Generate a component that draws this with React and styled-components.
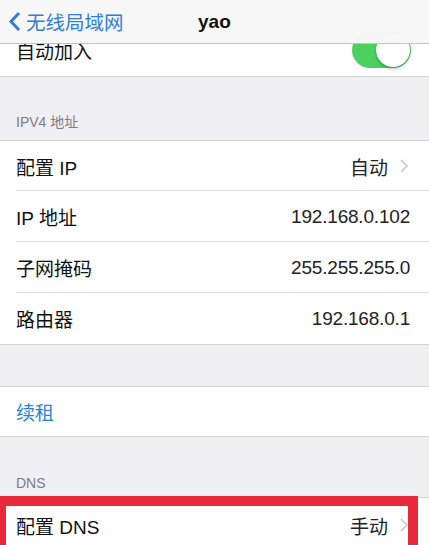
import styled, { createGlobalStyle } from "styled-components";

const GlobalStyle = createGlobalStyle`
  html, body {
    margin: 0;
    padding: 0;
    background: #efeff4;
  }
  body {
    font-family: "Liberation Sans", "Noto Sans CJK SC", sans-serif;
    color: #000;
  }
`;

const Screen = styled.div`
  position: relative;
  width: 429px;
  height: 545px;
  overflow: hidden;
  background: #efeff4;
`;

const NavBar = styled.div`
  position: absolute;
  top: 0;
  left: 0;
  right: 0;
  height: 43px;
  z-index: 2;
  background: rgba(247, 247, 248, 0.98);
  border-bottom: 1px solid #c4c4c8;
  display: flex;
  align-items: center;
`;

const BackButton = styled.div`
  display: flex;
  align-items: center;
  gap: 5px;
  padding-left: 8px;
  color: #2f7fd8;
  font-size: 19.5px;
  width: 190px;
`;

const NavTitle = styled.div`
  font-family: "Liberation Sans", sans-serif;
  font-weight: 700;
  font-size: 19px;
  color: #111;
`;

const Content = styled.div`
  padding-top: 24px;
  display: flex;
  flex-direction: column;
`;

const Group = styled.div`
  position: relative;
  background: #fff;
  border-top: 1px solid #d2d2d6;
  border-bottom: 1px solid #d2d2d6;
`;

const Row = styled.div`
  display: flex;
  align-items: center;
  height: ${(p) => p.$height || 51}px;
  padding-left: 16px;
  padding-right: ${(p) => (p.$chevron ? 21 : 19)}px;
  position: relative;
  &:not(:last-child)::after {
    content: "";
    position: absolute;
    left: 16px;
    right: 0;
    bottom: 0;
    height: 1px;
    background: #dcdcdf;
  }
`;

const Label = styled.div`
  flex: 1;
  font-size: 19px;
  color: ${(p) => (p.$link ? "#3181d2" : "#111")};
`;

const Value = styled.div`
  font-size: 19px;
  letter-spacing: ${(p) => (p.$digits ? "-0.2px" : "0")};
  color: #222;
`;

const Chevron = styled.svg`
  margin-left: 12px;
  width: 8px;
  height: 14px;
`;

const Toggle = styled.div`
  width: 59px;
  height: 36px;
  border-radius: 18px;
  background: #4cd160;
  position: relative;
  margin-right: -1px;
  margin-top: -2px;
`;

const Knob = styled.div`
  position: absolute;
  right: 1px;
  top: 1px;
  width: 34px;
  height: 34px;
  border-radius: 50%;
  background: #fff;
  box-shadow: 0 2px 3px rgba(0, 0, 0, 0.25), 0 0 1px rgba(0, 0, 0, 0.2);
`;

const SectionHeader = styled.div`
  height: ${(p) => p.$height}px;
  display: flex;
  align-items: flex-end;
  padding: 0 16px ${(p) => p.$pad}px;
  box-sizing: border-box;
  font-size: 14px;
  color: #7d7d82;
`;

const Spacer = styled.div`
  height: ${(p) => p.$height}px;
`;

const Highlight = styled.div`
  position: absolute;
  top: -2px;
  left: -4px;
  right: 11px;
  height: 62px;
  border: 10px solid #e82a3c;
  box-sizing: border-box;
  pointer-events: none;
`;

const RightChevron = () => (
  <Chevron viewBox="0 0 8 14">
    <path d="M1 1l6 6-6 6" fill="none" stroke="#c7c7cc" strokeWidth="1.6" />
  </Chevron>
);

const rows = [
  { label: "IP 地址", value: "192.168.0.102" },
  { label: "子网掩码", value: "255.255.255.0" },
  { label: "路由器", value: "192.168.0.1" },
];

export default function App() {
  return (
    <Screen>
      <GlobalStyle />
      <NavBar>
        <BackButton>
          <svg width="13" height="21" viewBox="0 0 13 21">
            <path d="M11 2L3 10.5 11 19" fill="none" stroke="#2f7fd8" strokeWidth="3" />
          </svg>
          无线局域网
        </BackButton>
        <NavTitle>yao</NavTitle>
      </NavBar>

      <Content>
        <Group>
          <Row>
            <Label>自动加入</Label>
            <Toggle>
              <Knob />
            </Toggle>
          </Row>
        </Group>

        <SectionHeader $height={63} $pad={9}>IPV4 地址</SectionHeader>
        <Group>
          <Row $height={50} $chevron>
            <Label>配置 IP</Label>
            <Value>自动</Value>
            <RightChevron />
          </Row>
          {rows.map((r) => (
            <Row key={r.label}>
              <Label>{r.label}</Label>
              <Value $digits>{r.value}</Value>
            </Row>
          ))}
        </Group>

        <Spacer $height={41} />
        <Group>
          <Row $height={49}>
            <Label $link>续租</Label>
          </Row>
        </Group>

        <SectionHeader $height={60} $pad={6}>DNS</SectionHeader>
        <Group>
          <Row $height={54} $chevron>
            <Label>配置 DNS</Label>
            <Value>手动</Value>
            <RightChevron />
          </Row>
          <Highlight />
        </Group>
      </Content>
    </Screen>
  );
}
